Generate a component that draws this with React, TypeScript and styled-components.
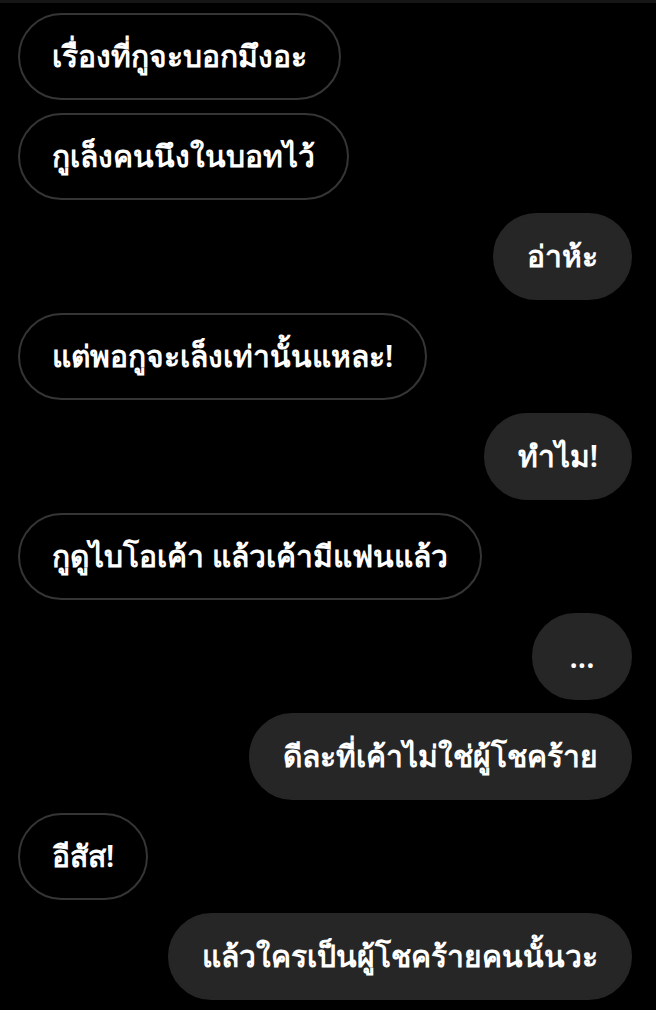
import styled, { createGlobalStyle } from 'styled-components';

const GlobalStyle = createGlobalStyle`
  html, body {
    margin: 0;
    padding: 0;
    background: #000;
  }
  body {
    font-family: "Noto Sans", "DejaVu Sans", sans-serif;
  }
`;

const StyledThread = styled.div`
  width: 656px;
  min-height: 1010px;
  box-sizing: border-box;
  background: #000;
  border-top: 3px solid #161616;
  padding: 10px 24px 10px 18px;
  display: flex;
  flex-direction: column;
  gap: 13px;
`;

const StyledRow = styled.div<{ $mine?: boolean }>`
  display: flex;
  justify-content: ${(p) => (p.$mine ? 'flex-end' : 'flex-start')};
`;

const StyledBubble = styled.div<{ $mine?: boolean }>`
  box-sizing: border-box;
  height: 87px;
  min-width: 100px;
  padding: 0 32px;
  border-radius: 44px;
  display: flex;
  align-items: center;
  justify-content: center;
  color: #fff;
  font-size: 30px;
  font-weight: 600;
  white-space: nowrap;
  background: ${(p) => (p.$mine ? '#262626' : '#000')};
  border: 2px solid ${(p) => (p.$mine ? '#262626' : '#353535')};
`;

const messages: Array<{ text: string; mine?: boolean }> = [
  { text: 'เรื่องที่กูจะบอกมึงอะ' },
  { text: 'กูเล็งคนนึงในบอทไว้' },
  { text: 'อ่าห้ะ', mine: true },
  { text: 'แต่พอกูจะเล็งเท่านั้นแหละ!' },
  { text: 'ทำไม!', mine: true },
  { text: 'กูดูไบโอเค้า แล้วเค้ามีแฟนแล้ว' },
  { text: '...', mine: true },
  { text: 'ดีละที่เค้าไม่ใช่ผู้โชคร้าย', mine: true },
  { text: 'อีสัส!' },
  { text: 'แล้วใครเป็นผู้โชคร้ายคนนั้นวะ', mine: true }
];

export default function App() {
  return (
    <>
      <GlobalStyle />
      <StyledThread>
        {messages.map((m, i) => (
          <StyledRow key={i} $mine={m.mine}>
            <StyledBubble $mine={m.mine}>{m.text}</StyledBubble>
          </StyledRow>
        ))}
      </StyledThread>
    </>
  );
}
